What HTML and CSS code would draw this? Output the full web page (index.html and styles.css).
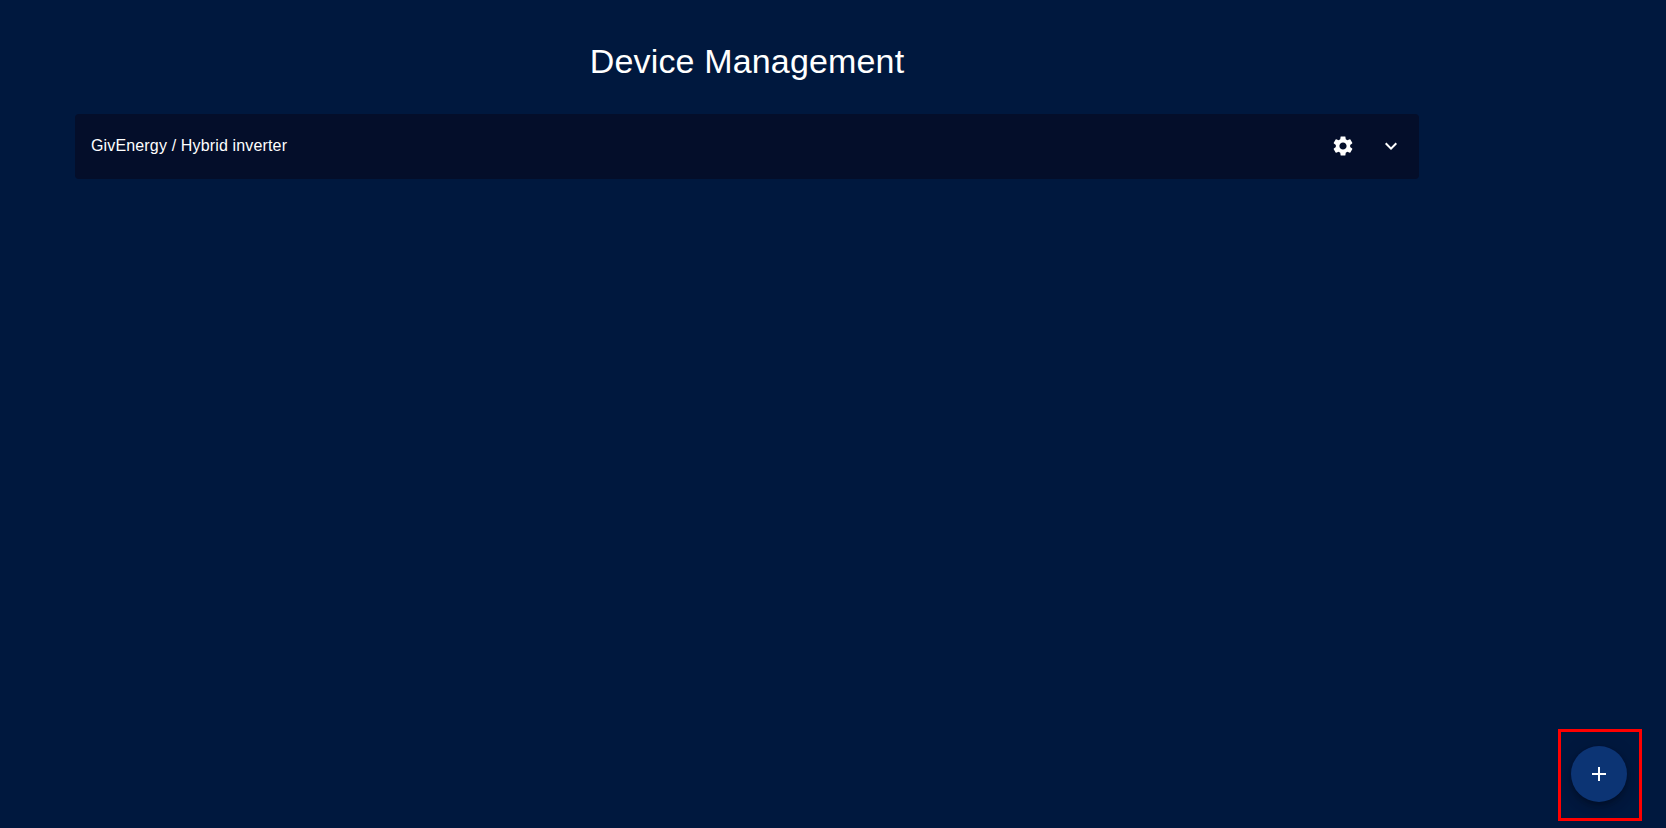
FILE: index.html
```html
<!DOCTYPE html>
<html lang="en">
<head>
<meta charset="utf-8">
<title>Device Management</title>
<link rel="stylesheet" href="styles.css">
</head>
<body>
<main class="page">
  <h1 class="title">Device Management</h1>
  <section class="card">
    <span class="card-label">GivEnergy / Hybrid inverter</span>
    <div class="card-actions">
      <button class="icon-btn" aria-label="Settings">
        <svg class="icon" viewBox="0 0 24 24"><path d="M19.14 12.94c.04-.3.06-.61.06-.94 0-.32-.02-.64-.07-.94l2.03-1.58c.18-.14.23-.41.12-.61l-1.92-3.32c-.12-.22-.37-.29-.59-.22l-2.39.96c-.5-.38-1.03-.7-1.62-.94l-.36-2.54c-.04-.24-.24-.41-.48-.41h-3.84c-.24 0-.43.17-.47.41l-.36 2.54c-.59.24-1.13.57-1.62.94l-2.39-.96c-.22-.08-.47 0-.59.22L2.74 8.87c-.12.21-.08.47.12.61l2.03 1.58c-.05.3-.09.63-.09.94s.02.64.07.94l-2.03 1.58c-.18.14-.23.41-.12.61l1.92 3.32c.12.22.37.29.59.22l2.39-.96c.5.38 1.03.7 1.62.94l.36 2.54c.05.24.24.41.48.41h3.84c.24 0 .44-.17.47-.41l.36-2.54c.59-.24 1.13-.56 1.62-.94l2.39.96c.22.08.47 0 .59-.22l1.92-3.32c.12-.22.07-.47-.12-.61l-2.01-1.58zM12 15.6c-1.98 0-3.6-1.62-3.6-3.6s1.62-3.6 3.6-3.6 3.6 1.62 3.6 3.6-1.62 3.6-3.6 3.6z"/></svg>
      </button>
      <button class="icon-btn" aria-label="Expand">
        <svg class="icon" viewBox="0 0 24 24"><path d="M16.59 8.59 12 13.17 7.41 8.59 6 10l6 6 6-6z"/></svg>
      </button>
    </div>
  </section>
</main>
<div class="fab-highlight">
  <button class="fab" aria-label="Add device">
    <svg class="icon" viewBox="0 0 24 24"><path d="M19 13h-6v6h-2v-6H5v-2h6V5h2v6h6v2z"/></svg>
  </button>
</div>
</body>
</html>
```
FILE: styles.css
```css
* { box-sizing: border-box; }
html, body { height: 100%; }
body {
  margin: 0;
  background: #00183e;
  color: #fff;
  font-family: "Liberation Sans", Arial, sans-serif;
  overflow: hidden;
}
.page {
  width: 1344px;
  margin-left: 75px;
  padding-top: 41px;
}
.title {
  margin: 0 0 32px;
  font-size: 34px;
  font-weight: 400;
  line-height: 41px;
  letter-spacing: 0.16px;
  text-align: center;
}
.card {
  display: flex;
  align-items: center;
  justify-content: space-between;
  height: 65px;
  padding: 0 16px 2px;
  background: #040e2a;
  border-radius: 4px;
}
.card-label { font-size: 16px; line-height: 24px; letter-spacing: 0.15px; }
.card-actions { display: flex; align-items: center; gap: 24px; }
.icon-btn, .fab {
  display: flex;
  align-items: center;
  justify-content: center;
  padding: 0;
  border: 0;
  color: #fff;
  cursor: pointer;
}
.icon-btn { width: 24px; height: 24px; background: none; }
.icon { display: block; width: 24px; height: 24px; fill: currentColor; }
.fab-highlight {
  position: absolute;
  left: 1558px;
  top: 729px;
  width: 84px;
  height: 92px;
  display: flex;
  align-items: center;
  justify-content: center;
  padding: 0 2px 2px 0;
  border: 3px solid #ff0000;
}
.fab {
  width: 56px;
  height: 56px;
  border-radius: 50%;
  background: #0c3474;
  box-shadow: 0 3px 5px -1px rgba(0,0,0,.2), 0 6px 10px 0 rgba(0,0,0,.14), 0 1px 18px 0 rgba(0,0,0,.12);
}
```
